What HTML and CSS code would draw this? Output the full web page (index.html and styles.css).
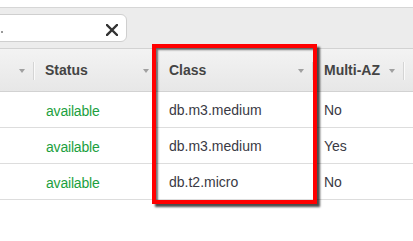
FILE: index.html
```html
<!DOCTYPE html>
<html lang="en">

<head>
    <meta charset="UTF-8">
    <meta name="viewport" content="width=device-width, initial-scale=1.0">
    <title>DB Instances</title>
    <link rel="stylesheet" href="styles.css">
</head>

<body>
    <div class="page">
        <div class="topline"></div>

        <!-- filter bar -->
        <div class="toolbar">
            <div class="search">
                <span class="search-tick"></span>
                <svg class="clear" width="12" height="12" viewBox="0 0 12 12">
                    <path d="M1 1 L11 11 M11 1 L1 11" stroke="#333" stroke-width="2.4" stroke-linecap="square" fill="none" />
                </svg>
            </div>
        </div>

        <div class="grid">
            <div class="row head">
                <div class="cell"><span class="grow"></span><span class="caret"></span><span class="sep"></span></div>
                <div class="cell"><span class="title">Status</span><span class="grow"></span><span class="caret"></span><span class="sep"></span></div>
                <div class="cell"><span class="title">Class</span><span class="grow"></span><span class="caret"></span><span class="sep"></span></div>
                <div class="cell"><span class="title">Multi-AZ</span><span class="grow"></span><span class="caret"></span><span class="sep"></span></div>
                <div class="cell"></div>
            </div>
            <div class="row">
                <div class="cell"></div>
                <div class="cell status">available</div>
                <div class="cell">db.m3.medium</div>
                <div class="cell">No</div>
                <div class="cell"></div>
            </div>
            <div class="row">
                <div class="cell"></div>
                <div class="cell status">available</div>
                <div class="cell">db.m3.medium</div>
                <div class="cell">Yes</div>
                <div class="cell"></div>
            </div>
            <div class="row">
                <div class="cell"></div>
                <div class="cell status">available</div>
                <div class="cell">db.t2.micro</div>
                <div class="cell">No</div>
                <div class="cell"></div>
            </div>
        </div>

        <!-- red annotation round the Class column -->
        <div class="highlight"></div>
    </div>
</body>

</html>
```

FILE: styles.css
```css
body {
    margin: 0;
    padding: 0;
    background-color: #ffffff;
    font-family: "Liberation Sans", Arial, sans-serif;
}

.page {
    position: relative;
    width: 413px;
    height: 241px;
    overflow: hidden;
}

.topline {
    height: 7px;
    border-bottom: 1px solid #d6d6d6;
}

.toolbar {
    height: 40px;
    background-color: #ececec;
    padding-top: 6px;
    box-sizing: border-box;
}

.search {
    display: flex;
    align-items: center;
    margin-left: -10px;
    width: 137px;
    height: 28px;
    box-sizing: border-box;
    background-color: #ffffff;
    border: 1px solid #cfcfcf;
    border-radius: 6px;
    padding-right: 8px;
}

.search-tick {
    width: 2px;
    height: 2px;
    margin-left: 10px;
    margin-top: 8px;
    background-color: #9a9a9a;
}

.clear {
    margin-left: auto;
    margin-top: 4px;
}

.row {
    display: grid;
    grid-template-columns: 34px 124px 155px 91px 1fr;
    height: 36px;
    box-sizing: border-box;
    border-bottom: 1px solid #dddddd;
}

.row.head {
    height: 44px;
    border-top: 1px solid #d2d2d2;
    border-bottom: 1px solid #d2d2d2;
    background: linear-gradient(#f3f3f3, #e7e7e7);
}

.cell {
    display: flex;
    align-items: center;
    padding-left: 11px;
    font-size: 14px;
    color: #3a3a44;
    white-space: nowrap;
}

.row.head .cell:first-child {
    padding-left: 0;
}

.title {
    font-weight: bold;
    color: #444444;
}

.grow {
    flex: 1;
}

.caret {
    width: 0;
    height: 0;
    border-left: 3px solid transparent;
    border-right: 3px solid transparent;
    border-top: 4px solid #a0a0a0;
    margin-right: 8px;
    margin-top: 2px;
}

.sep {
    width: 1px;
    height: 18px;
    background-color: #d4d4d4;
    box-shadow: 1px 0 #fafafa;
    margin-top: 1px;
}

.status {
    color: #1c9f40;
    font-size: 14px;
    letter-spacing: -0.2px;
    padding-left: 12px;
    padding-top: 3px;
}

.highlight {
    position: absolute;
    left: 152px;
    top: 44px;
    width: 165px;
    height: 160px;
    box-sizing: border-box;
    border: 4px solid #ff0000;
    box-shadow: 3px 3px 2px rgba(0, 0, 0, 0.7), inset 2px 2px 2px rgba(0, 0, 0, 0.55);
}
```
